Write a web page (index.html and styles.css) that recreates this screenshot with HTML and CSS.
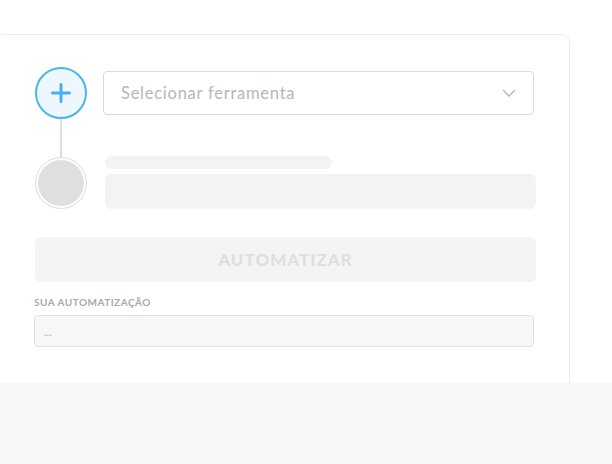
FILE: index.html
```html
<!DOCTYPE html>
<html lang="pt">
<head>
<meta charset="utf-8">
<link rel="stylesheet" href="styles.css">
</head>
<body>
<div class="page">
  <div class="card">
    <div class="row">
      <div class="step step-active">
        <svg width="20" height="20" viewBox="0 0 20 20"><path d="M10 1.5V18.5M1.5 10H18.5" stroke="#45b0ee" stroke-width="3" stroke-linecap="round" fill="none"/></svg>
      </div>
      <div class="select">
        <span class="select-text">Selecionar ferramenta</span>
        <svg class="chev" width="14" height="8" viewBox="0 0 14 8"><path d="M1 1L7 7L13 1" stroke="#b8bcc0" stroke-width="1.6" fill="none"/></svg>
      </div>
    </div>
    <div class="connector"></div>
    <div class="row row-skel">
      <div class="step step-idle"><div class="step-fill"></div></div>
      <div class="skel">
        <div class="skel-line"></div>
        <div class="skel-box"></div>
      </div>
    </div>
    <div class="btn">AUTOMATIZAR</div>
    <div class="label">SUA AUTOMATIZAÇÃO</div>
    <div class="output">...</div>
  </div>
</div>
<div class="footer"></div>
</body>
</html>
```
FILE: styles.css
```css
html, body {
  margin: 0;
  padding: 0;
  background: #ffffff;
  font-family: Lato, "Open Sans", Arial, sans-serif;
}
.page {
  height: 383px;
  padding-top: 34px;
  box-sizing: border-box;
}
.card {
  margin-left: 2px;
  width: 568px;
  height: 349px;
  box-sizing: border-box;
  border-top: 1px solid #ececec;
  border-right: 1px solid #ececec;
  border-top-right-radius: 9px;
  padding: 32px 0 0 33px;
}
.row {
  display: flex;
  align-items: center;
}
.step {
  width: 52px;
  height: 52px;
  box-sizing: border-box;
  border-radius: 50%;
  flex: none;
  display: flex;
  align-items: center;
  justify-content: center;
}
.step-active {
  border: 2px solid #4cb4ef;
  background: #eef7fd;
}
.step-idle {
  border: 1px solid #dcdcdc;
  background: #fff;
  padding: 2px;
}
.step-fill {
  width: 100%;
  height: 100%;
  border-radius: 50%;
  background: #dedfe1;
}
.select {
  margin-left: 16px;
  width: 431px;
  height: 44px;
  box-sizing: border-box;
  border: 1px solid #dadada;
  border-radius: 4px;
  display: flex;
  align-items: center;
  justify-content: space-between;
  padding: 0 17px 0 17px;
}
.select-text {
  font-size: 16.5px;
  letter-spacing: 0.75px;
  color: #b7b7b7;
}
.chev {
  display: block;
}
.connector {
  width: 2px;
  height: 38px;
  margin-left: 25px;
  background: #dedede;
}
.row-skel {
  align-items: flex-start;
}
.skel {
  margin-left: 18px;
  margin-top: -1px;
  display: flex;
  flex-direction: column;
  gap: 5px;
}
.skel-line {
  width: 227px;
  height: 13px;
  border-radius: 7px;
  background: #f3f3f3;
}
.skel-box {
  width: 431px;
  height: 35px;
  border-radius: 6px;
  background: #f3f3f3;
}
.btn {
  margin-top: 28px;
  width: 501px;
  height: 45px;
  border-radius: 6px;
  background: #f4f4f4;
  color: #dfdfdf;
  font-weight: 900;
  font-size: 17px;
  letter-spacing: 1px;
  display: flex;
  align-items: center;
  justify-content: center;
}
.label {
  margin-top: 14px;
  margin-left: -1px;
  font-size: 10px;
  font-weight: 700;
  letter-spacing: 0.5px;
  color: #a9a9a9;
  line-height: 12px;
}
.output {
  margin-top: 7px;
  margin-left: -1px;
  width: 500px;
  height: 32px;
  box-sizing: border-box;
  border: 1px solid #dfe2e5;
  border-radius: 4px;
  background: #f6f7f9;
  font-size: 11px;
  color: #b0b0b0;
  padding: 0 9px;
  display: flex;
  align-items: center;
}
.footer {
  height: 81px;
  background: #f7f7f7;
}
```
